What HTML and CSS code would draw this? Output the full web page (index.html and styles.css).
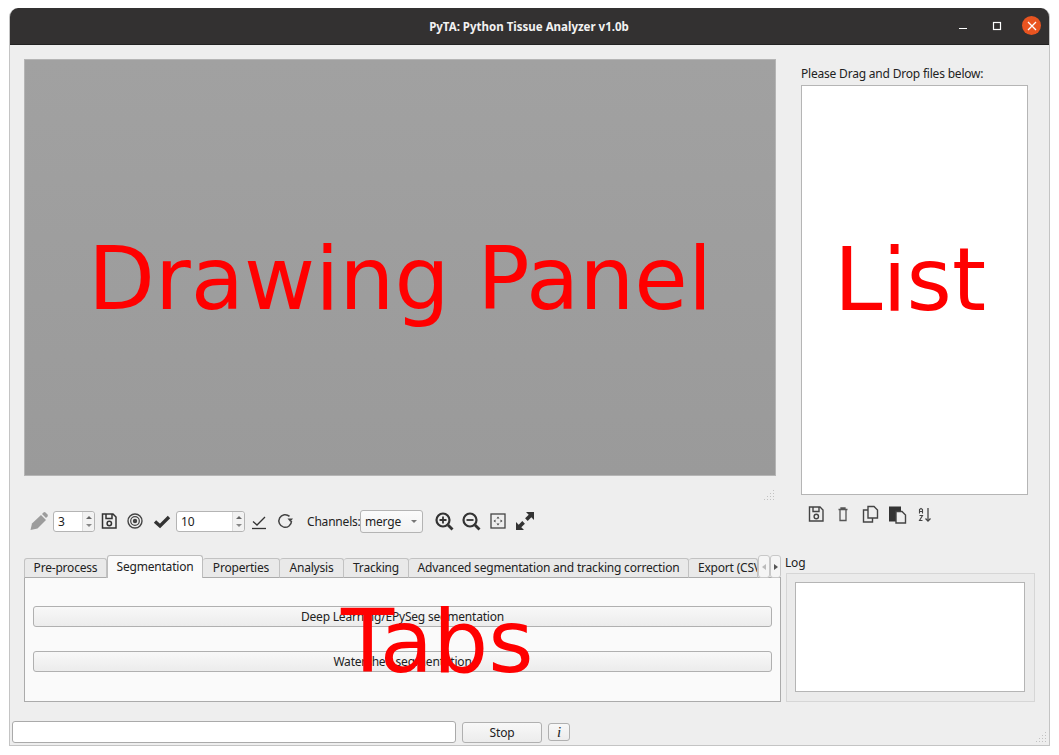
FILE: index.html
```html
<!doctype html>
<html lang="en">
<head>
    <meta charset="UTF-8">
    <title>PyTA: Python Tissue Analyzer v1.0b</title>
    <link rel="stylesheet" href="styles.css">
</head>
<body>
    <div class="window">
        <div class="titlebar">
            <div class="title">PyTA: Python Tissue Analyzer v1.0b</div>
            <div class="win-btns">
                <svg class="win-min" width="10" height="10" viewBox="0 0 10 10"><path d="M1 7.500h8" stroke="#fff" stroke-width="1.200"/></svg>
                <svg class="win-max" width="10" height="10" viewBox="0 0 10 10"><rect x="1.500" y="1.500" width="7" height="7" fill="none" stroke="#fff" stroke-width="1.200"/></svg>
                <div class="win-close">
                    <svg width="10" height="10" viewBox="0 0 10 10"><path d="M1 1l8 8M9 1l-8 8" stroke="#fff" stroke-width="1.300"/></svg>
                </div>
            </div>
        </div>

        <div class="top">
            <div class="left-col">
                <div class="canvas"><span class="big canvas-label">Drawing Panel</span></div>
                <div class="grip-row">
                    <svg width="12" height="12" viewBox="0 0 12 12" fill="#c2c2c2"><rect x="9" y="0" width="1" height="1"/><rect x="6" y="3" width="1" height="1"/><rect x="9" y="3" width="1" height="1"/><rect x="3" y="6" width="1" height="1"/><rect x="6" y="6" width="1" height="1"/><rect x="9" y="6" width="1" height="1"/><rect x="0" y="9" width="1" height="1"/><rect x="3" y="9" width="1" height="1"/><rect x="6" y="9" width="1" height="1"/><rect x="9" y="9" width="1" height="1"/></svg>
                </div>
                <div class="toolbar">
                    <svg class="icon" viewBox="0 0 20 20"><path d="M1.500 19l1.500-6.500 9-8.500 5 5-8.500 8.500z" fill="#9c9c9c"/><path d="M13 3l1.500-1.500q1-.8 2 0l2 2q.8 1 0 2l-1.500 1.500z" fill="#9c9c9c"/></svg>
                    <div class="spin spin-small"><span>3</span><i class="spin-arrows"></i></div>
                    <svg class="icon" viewBox="0 0 20 20"><path d="M3.500 3h10.500l3 3v11h-13.500z M7 3v4.500h6v-4.500" fill="none" stroke="#333" stroke-width="1.500"/><circle cx="10.300" cy="12.500" r="2.200" fill="none" stroke="#333" stroke-width="1.500"/></svg>
                    <svg class="icon m-6" viewBox="0 0 20 20" fill="none" stroke="#444"><circle cx="10" cy="10" r="7" stroke-width="1.400"/><circle cx="10" cy="10" r="4.300" stroke-width="1.200"/><circle cx="10" cy="10" r="2.200" fill="#444" stroke="none"/></svg>
                    <svg class="icon m-7" viewBox="0 0 20 20"><path d="M3 10.500l5 4.500 9-9" fill="none" stroke="#333" stroke-width="3.400"/></svg>
                    <div class="spin spin-wide"><span>10</span><i class="spin-arrows"></i></div>
                    <svg class="icon" viewBox="0 0 20 20"><path d="M4 10.500l4 3.500 8-8" fill="none" stroke="#333" stroke-width="1.300"/><path d="M3 17.500h14" stroke="#333" stroke-width="1.300"/></svg>
                    <svg class="icon m-6" viewBox="0 0 20 20"><path d="M16.500 10a6.300 6.300 0 1 1-2-4.600" fill="none" stroke="#444" stroke-width="1.500"/><path d="M12.500 7.500h5.500l-2.700 3.500z" fill="#444"/></svg>
                    <span class="channels">Channels:</span>
                    <div class="combo"><span>merge</span><i class="combo-arrow"></i></div>
                    <svg class="icon m-11" viewBox="0 0 20 20" fill="none" stroke="#333"><circle cx="9" cy="9" r="6.500" stroke-width="2.200"/><path d="M14 14l4.500 4.500" stroke-width="2.800"/><path d="M5.500 9h7M9 5.500v7" stroke-width="1.800"/></svg>
                    <svg class="icon m-7" viewBox="0 0 20 20" fill="none" stroke="#333"><circle cx="9" cy="9" r="6.500" stroke-width="2.200"/><path d="M14 14l4.500 4.500" stroke-width="2.800"/><path d="M5.500 9h7" stroke-width="1.800"/></svg>
                    <svg class="icon m-7" viewBox="0 0 20 20"><rect x="3" y="3" width="14" height="14" fill="none" stroke="#444" stroke-width="1.300"/><path d="M10 5.500l1.500 2h-3zM10 14.500l1.500-2h-3zM5.500 10l2-1.500v3zM14.500 10l-2-1.500v3z" fill="#444"/></svg>
                    <svg class="icon m-7" viewBox="0 0 20 20" fill="#333"><path d="M11 1h8v8l-2.700-2.700-3.600 3.600-2.600-2.600 3.600-3.600zM9 19h-8v-8l2.700 2.700 3.600-3.600 2.600 2.600-3.600 3.600z"/></svg>
                </div>
            </div>
            <div class="right-col">
                <div class="drop-label">Please Drag and Drop files below:</div>
                <div class="list"><span class="big list-label">List</span></div>
                <div class="list-tools">
                    <svg class="icon" viewBox="0 0 20 20"><path d="M3.500 3h10.500l3 3v11h-13.500z M7 3v4.500h6v-4.500" fill="none" stroke="#444" stroke-width="1.400"/><circle cx="10.300" cy="12.500" r="2.200" fill="none" stroke="#444" stroke-width="1.400"/></svg>
                    <svg class="icon" viewBox="0 0 20 20" fill="none" stroke="#555" stroke-width="1.300"><path d="M5.500 5.500h9M8 5v-1h4v1M7 6v10.500h6v-10.500"/></svg>
                    <svg class="icon" viewBox="0 0 20 20" fill="none" stroke="#444" stroke-width="1.400"><path d="M8 14v-11.500h6l3.500 3.500v8z"/><path d="M8 6h-4.500v12h9v-4"/></svg>
                    <svg class="icon" viewBox="0 0 20 20"><path d="M2 2.500h12v15h-12z" fill="#333"/><path d="M9 7.500h6l3.500 3.500v8h-9.500z" fill="#eee" stroke="#444" stroke-width="1.400"/></svg>
                    <svg class="icon" viewBox="0 0 20 20"><path d="M14 4v13" stroke="#444" stroke-width="1.300"/><path d="M11.500 14.500l2.500 2.500 2.500-2.500" fill="none" stroke="#444" stroke-width="1.300"/><path d="M5.500 9.500v-4l1.500-1 1.500 1v4M5.500 7.500h3M5.500 11.500h3l-3 5h3" fill="none" stroke="#444" stroke-width="1.100"/></svg>
                </div>
            </div>
        </div>

        <div class="bottom">
            <div class="tabs">
                <div class="tabbar">
                    <div class="tab tab-pre">Pre-process</div>
                    <div class="tab tab-seg active">Segmentation</div>
                    <div class="tab tab-prop">Properties</div>
                    <div class="tab tab-ana">Analysis</div>
                    <div class="tab tab-track">Tracking</div>
                    <div class="tab tab-adv">Advanced segmentation and tracking correction</div>
                    <div class="tab tab-export">Export (CSV)</div>
                    <div class="scroll-btn"><i class="arrow-left"></i></div>
                    <div class="scroll-btn"><i class="arrow-right"></i></div>
                </div>
                <div class="pane">
                    <div class="btn wide-btn">Deep Learning/EPySeg segmentation</div>
                    <div class="btn wide-btn">Watershed segmentation</div>
                    <span class="big tabs-label">Tabs</span>
                </div>
            </div>
            <div class="log">
                <div class="log-label">Log</div>
                <div class="log-group"><div class="log-box"></div></div>
            </div>
        </div>

        <div class="status">
            <div class="status-input"></div>
            <div class="btn stop-btn">Stop</div>
            <div class="btn info-btn">i</div>
            <svg class="size-grip" width="12" height="12" viewBox="0 0 12 12" fill="#c2c2c2"><rect x="9" y="0" width="1" height="1"/><rect x="6" y="3" width="1" height="1"/><rect x="9" y="3" width="1" height="1"/><rect x="3" y="6" width="1" height="1"/><rect x="6" y="6" width="1" height="1"/><rect x="9" y="6" width="1" height="1"/><rect x="0" y="9" width="1" height="1"/><rect x="3" y="9" width="1" height="1"/><rect x="6" y="9" width="1" height="1"/><rect x="9" y="9" width="1" height="1"/></svg>
        </div>
    </div>
</body>
</html>
```
FILE: styles.css
```css
html,body{
    margin:0;
    padding:0;
    background:#fff;
}
body{
    padding:8px 0 0 9px;
    font-family:"Noto Sans","Open Sans",sans-serif;
    font-size:12px;
    letter-spacing:-.2px;
    color:#222;
}
.window{
    width:1041px;
    height:738px;
    box-sizing:border-box;
    border:1px solid #c4c4c4;
    border-top:0;
    border-radius:9px 9px 0 0;
    background:#eee;
    position:relative;
    overflow:hidden;
}
.titlebar{
    height:37px;
    box-sizing:border-box;
    border-bottom:1px solid #222;
    background:#333131;
    display:flex;
    align-items:center;
    justify-content:center;
    position:relative;
}
.title{
    color:#f2f2f2;
    font-weight:bold;
    font-size:11.5px;
    letter-spacing:0;
    padding-right:1px;
}
.win-btns{
    position:absolute;
    right:8px;
    top:8px;
    display:flex;
    align-items:center;
}
.win-min{
    margin-right:24px;
}
.win-max{
    margin-right:20px;
}
.win-close{
    width:19px;
    height:19px;
    border-radius:50%;
    background:#e95420;
    display:flex;
    align-items:center;
    justify-content:center;
}

/* top part */
.top{
    display:flex;
    height:510px;
    padding:14px 0 0 14px;
    box-sizing:border-box;
}
.left-col{
    width:752px;
    margin-right:25px;
}
.canvas{
    height:417px;
    box-sizing:border-box;
    border:1px solid #b5b5b5;
    background:linear-gradient(#a1a1a1,#9a9a9a);
    display:flex;
    align-items:center;
    justify-content:center;
}
.big{
    font-family:"DejaVu Sans",sans-serif;
    font-size:87px;
    letter-spacing:0;
    color:#f00;
    line-height:1;
}
.canvas-label{
    padding-top:24px;
}
.list-label{
    padding:0 9px 20px 0;
}
.grip-row{
    height:30px;
    display:flex;
    justify-content:flex-end;
    align-items:flex-end;
    padding-bottom:4px;
    box-sizing:border-box;
}
.toolbar{
    display:flex;
    align-items:center;
    gap:4px;
    padding:4px 0 0 5px;
    height:26px;
    box-sizing:border-box;
}
.icon{
    width:20px;
    height:20px;
    flex:none;
}
.m-6{
    margin-left:2px;
}
.m-7{
    margin-left:3px;
}
.m-11{
    margin-left:7px;
}
.spin{
    height:21px;
    box-sizing:border-box;
    border:1px solid #b4b4b4;
    border-radius:3px;
    background:#fff;
    display:flex;
    align-items:center;
    padding-left:4px;
    position:relative;
}
.spin-small{
    width:42px;
}
.spin-wide{
    width:69px;
}
.spin-arrows{
    position:absolute;
    right:0;
    top:0;
    bottom:0;
    width:11px;
    border-left:1px solid #ddd;
    background:#f2f2f2;
    border-radius:0 3px 3px 0;
}
.spin-arrows::before,.spin-arrows::after{
    content:"";
    position:absolute;
    left:3px;
    border-left:3px solid transparent;
    border-right:3px solid transparent;
}
.spin-arrows::before{
    top:4px;
    border-bottom:3px solid #666;
}
.spin-arrows::after{
    bottom:4px;
    border-top:3px solid #888;
}
.channels{
    margin-left:8px;
    width:53px;
    margin-right:-4px;
    white-space:nowrap;
}
.combo{
    width:63px;
    height:23px;
    box-sizing:border-box;
    border:1px solid #b4b4b4;
    border-radius:3px;
    background:linear-gradient(#fbfbfb,#f2f2f2);
    display:flex;
    align-items:center;
    padding-left:4px;
    position:relative;
}
.combo-arrow{
    position:absolute;
    right:5px;
    top:9px;
    border-left:3px solid transparent;
    border-right:3px solid transparent;
    border-top:3px solid #777;
}
.right-col{
    width:227px;
}
.drop-label{
    height:26px;
    line-height:29px;
    white-space:nowrap;
}
.list{
    height:410px;
    box-sizing:border-box;
    border:1px solid #b5b5b5;
    background:#fff;
    display:flex;
    align-items:center;
    justify-content:center;
}
.list-tools{
    display:flex;
    gap:7px;
    padding:9px 0 0 5px;
}

/* tabs and log */
.bottom{
    display:flex;
    height:147px;
    padding-left:14px;
}
.tabs{
    width:757px;
}
.tabbar{
    display:flex;
    height:23px;
    align-items:flex-end;
    position:relative;
    z-index:1;
}
.tab{
    height:20px;
    box-sizing:border-box;
    border:1px solid #c2c2c2;
    border-left:0;
    border-bottom:1px solid #ababab;
    border-radius:3px 3px 0 0;
    background:#e9e9e9;
    text-align:center;
    line-height:17px;
    white-space:nowrap;
    overflow:hidden;
    flex:none;
}
.tab-pre{
    width:83px;
    border-left:1px solid #c2c2c2;
}
.tab-seg{
    width:96px;
}
.tab-prop{
    width:77px;
}
.tab-ana{
    width:64px;
}
.tab-track{
    width:65px;
}
.tab-adv{
    width:280px;
}
.tab-export{
    width:69px;
    text-align:left;
    padding-left:9px;
}
.tab.active{
    height:23px;
    background:#fafafa;
    border:1px solid #bdbdbd;
    border-bottom:0;
    line-height:21px;
}
.scroll-btn{
    width:11.500px;
    height:23px;
    box-sizing:border-box;
    border:1px solid #c8c8c8;
    border-radius:3px;
    background:#f5f5f5;
    position:relative;
    flex:none;
}
.arrow-left,.arrow-right{
    position:absolute;
    top:8px;
    left:3px;
    border-top:3px solid transparent;
    border-bottom:3px solid transparent;
}
.arrow-left{
    border-right:4px solid #bbb;
}
.arrow-right{
    border-left:4px solid #555;
}
.pane{
    height:125px;
    box-sizing:border-box;
    border:1px solid #ababab;
    margin-top:-1px;
    background:#fafafa;
    padding:28px 8px 0;
    position:relative;
    display:flex;
    flex-direction:column;
    gap:24px;
}
.btn{
    box-sizing:border-box;
    border:1px solid #b0b0b0;
    border-radius:3px;
    background:linear-gradient(#f8f8f8,#ececec);
    text-align:center;
}
.wide-btn{
    height:21px;
    line-height:19px;
}
.tabs-label{
    position:absolute;
    left:316px;
    top:21px;
}
.log{
    margin-left:5px;
    width:249px;
}
.log-label{
    height:18px;
    line-height:15px;
    margin-left:-1px;
}
.log-group{
    height:129px;
    box-sizing:border-box;
    border:1px solid #d6d6d6;
    background:#ebebeb;
    padding:8px 9px 9px 8px;
}
.log-box{
    height:110px;
    box-sizing:border-box;
    border:1px solid #b5b5b5;
    background:#fff;
}

/* bottom line */
.status{
    display:flex;
    align-items:center;
    padding:19px 0 0 2px;
    height:22px;
}
.status-input{
    width:444px;
    height:22px;
    box-sizing:border-box;
    border:1px solid #aaa;
    border-radius:3px;
    background:#fff;
}
.stop-btn{
    width:80px;
    height:21px;
    line-height:19px;
    margin-left:6px;
}
.info-btn{
    width:22px;
    height:18px;
    line-height:16px;
    margin-left:6px;
    font-family:"Liberation Serif",serif;
    font-style:italic;
    font-size:15px;
}
.size-grip{
    position:absolute;
    right:1px;
    bottom:1px;
}
```
